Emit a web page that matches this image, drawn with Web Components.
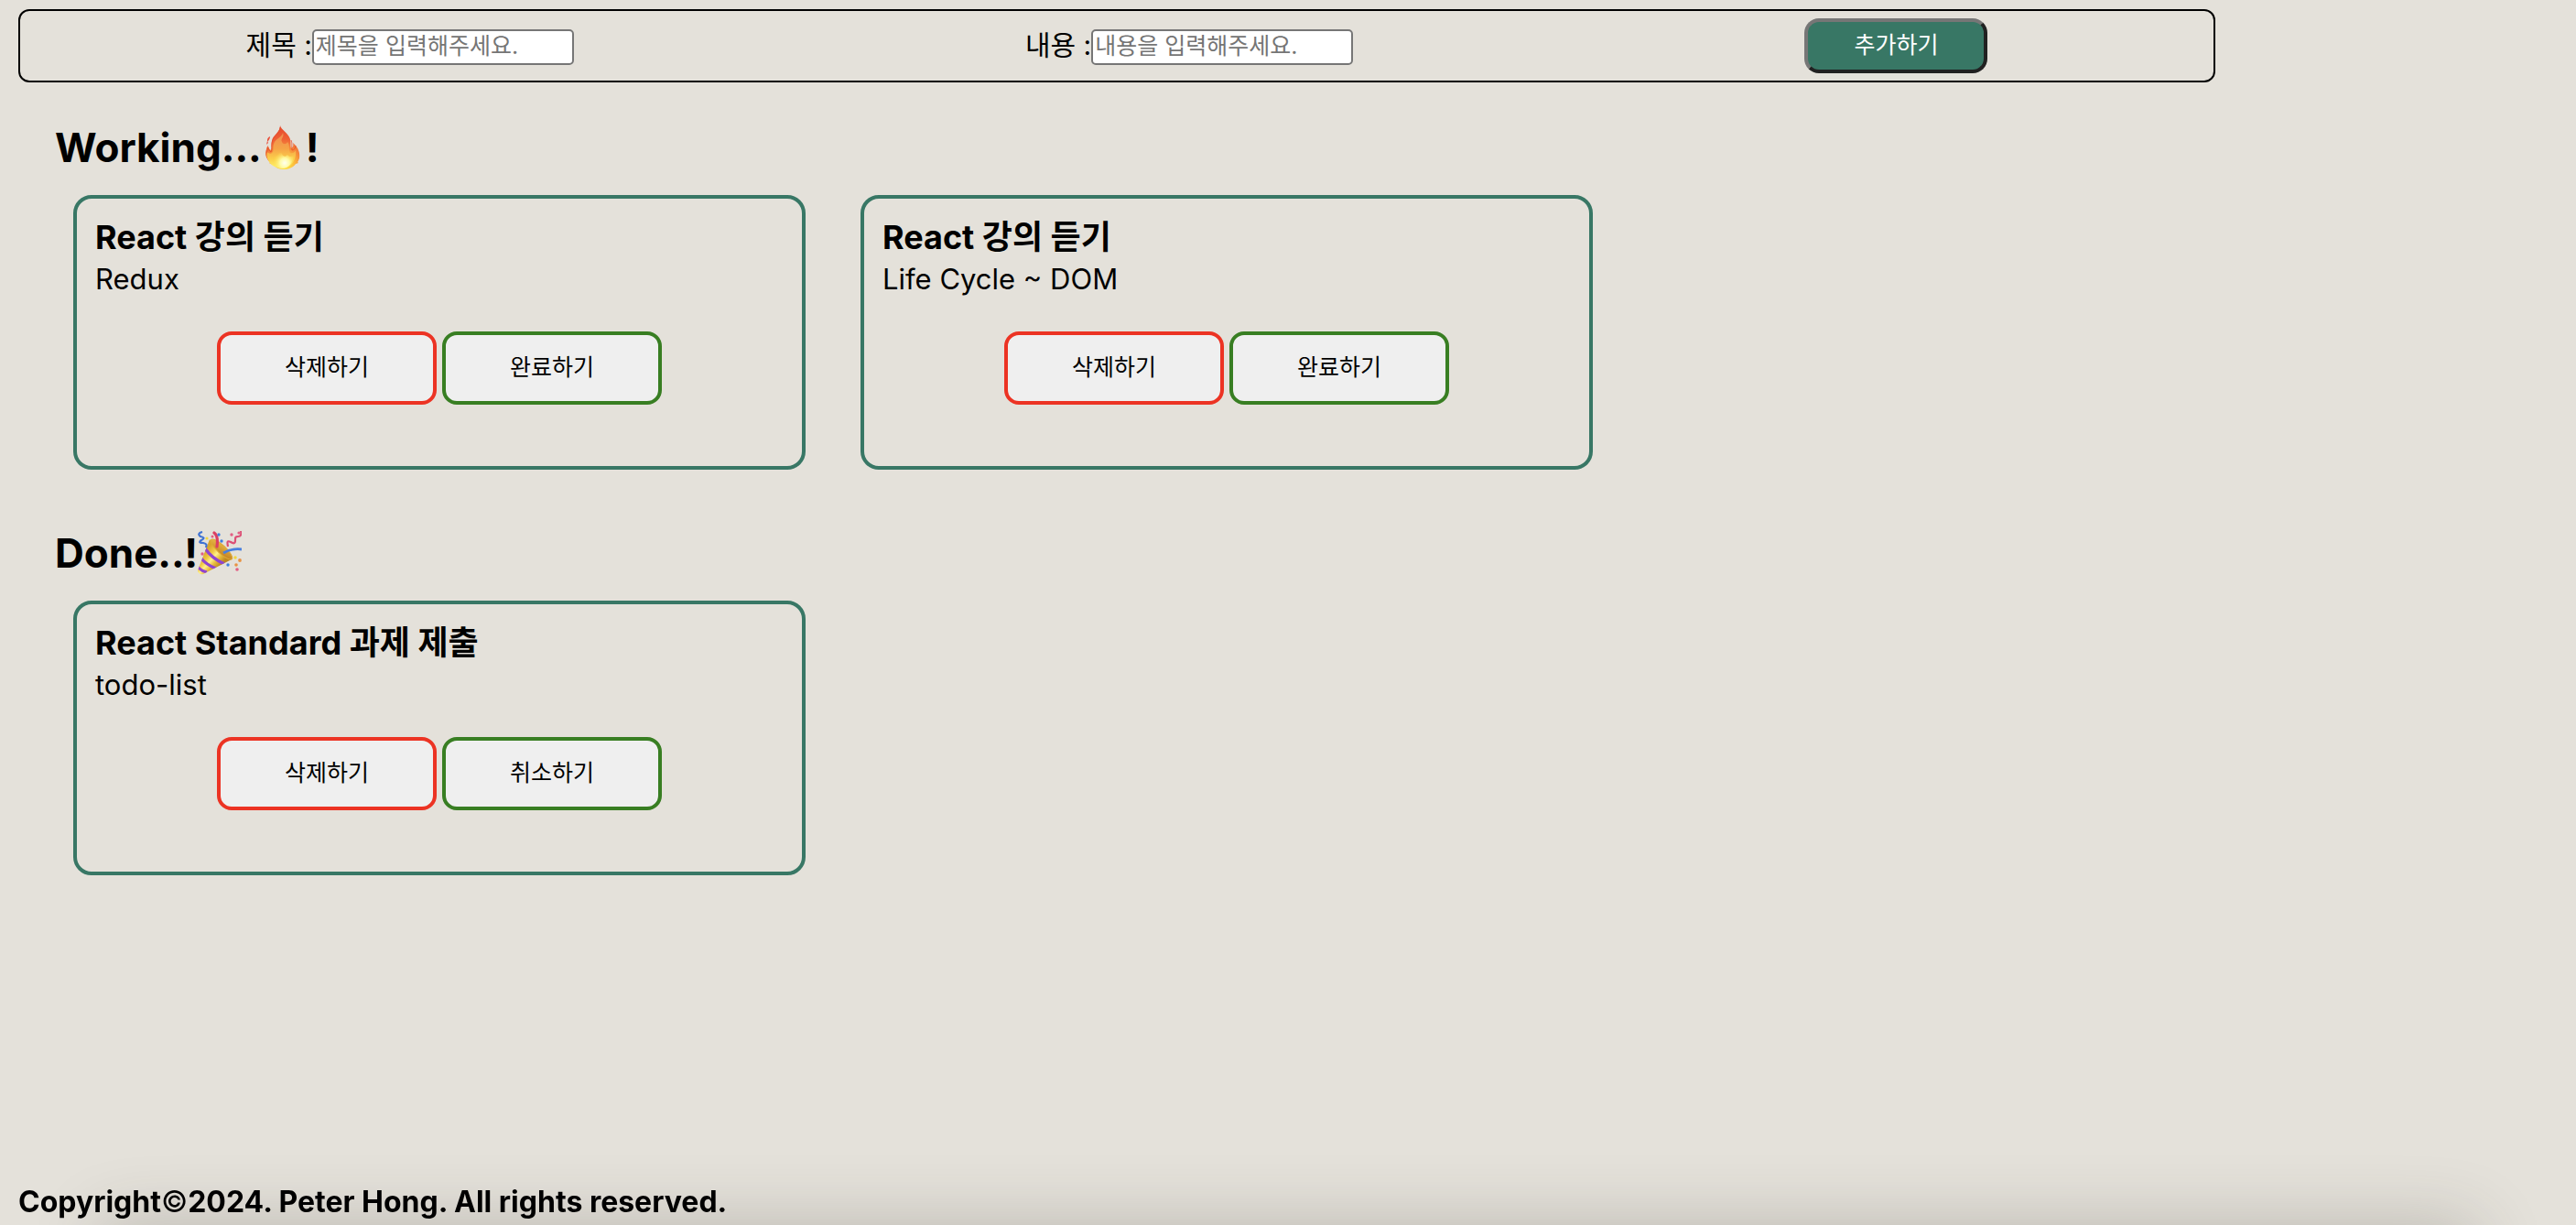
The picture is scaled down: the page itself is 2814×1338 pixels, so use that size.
<!DOCTYPE html>
<html lang="ko">
<head>
<meta charset="utf-8">
<meta name="viewport" content="width=device-width, initial-scale=1">
<title>Todo List</title>
<style>
  body {
    margin: 0;
    background: #e4e1da;
    color: #000;
    font-family: Inter, "Noto Sans CJK KR", sans-serif;
    font-size: 32px;
  }
</style>
</head>
<body>
<todo-app>
  <todo-form></todo-form>
  <todo-section>
    <span slot="heading">Working...<emoji-fire></emoji-fire>!</span>
    <todo-card action="완료하기"><span slot="title">React 강의 듣기</span>Redux</todo-card>
    <todo-card action="완료하기"><span slot="title">React 강의 듣기</span>Life Cycle ~ DOM</todo-card>
  </todo-section>
  <todo-section>
    <span slot="heading">Done..!<emoji-party></emoji-party></span>
    <todo-card action="취소하기"><span slot="title">React Standard 과제 제출</span>todo-list</todo-card>
  </todo-section>
  <todo-footer slot="footer"></todo-footer>
</todo-app>

<script>
  const define = (name, html, setup) => {
    const template = document.createElement('template');
    template.innerHTML = html;
    customElements.define(name, class extends HTMLElement {
      constructor() {
        super();
        this.attachShadow({ mode: 'open' }).append(template.content.cloneNode(true));
      }
      connectedCallback() {
        if (setup) setup(this, this.shadowRoot);
      }
    });
  };

  define('todo-app', `
    <style>
      :host { display: flex; flex-direction: column; box-sizing: border-box; min-height: 100vh; padding: 10px 20px 5px; }
      main { display: flex; flex-direction: column; gap: 62px; max-width: 2400px; width: 100%; flex: 1; }
      ::slotted(todo-form) { margin-bottom: -20px; }
    </style>
    <main><slot></slot></main>
    <slot name="footer"></slot>
  `);

  define('todo-form', `
    <style>
      form { display: flex; flex-wrap: wrap; justify-content: space-around; align-items: center; row-gap: 8px;
        padding: 8px 0; border: 2px solid #000; border-radius: 12px; }
      .field { display: flex; align-items: center; padding-top: 2px; }
      label { font-size: 30px; line-height: 36px; white-space: pre; padding-bottom: 4px; }
      input { box-sizing: border-box; width: 286px; height: 39px; margin: 0; padding: 0 2px 2px;
        border: 2px solid #767676; border-radius: 5px; background: #fff; font: inherit; font-size: 25px; line-height: 30px; }
      input::placeholder { color: #757575; }
      button { box-sizing: border-box; width: 200px; height: 60px; padding: 0 0 6px; border: 4px solid;
        border-color: #767676 #212121 #212121 #767676; border-radius: 16px; background: #387765; color: #fff;
        font: inherit; font-size: 25px; cursor: pointer; }
    </style>
    <form>
      <div class="field"><label for="title">제목 :</label><input id="title" type="text" placeholder="제목을 입력해주세요."></div>
      <div class="field"><label for="body">내용 :</label><input id="body" type="text" placeholder="내용을 입력해주세요."></div>
      <button type="button">추가하기</button>
    </form>
  `);

  define('todo-section', `
    <style>
      :host { display: block; padding-left: 40px; }
      h1 { margin: 0 0 23px; font-size: 44px; line-height: 58px; font-weight: 700; }
      .list { display: flex; flex-wrap: wrap; gap: 60px; padding-left: 20px; }
    </style>
    <section>
      <h1><slot name="heading"></slot></h1>
      <div class="list"><slot></slot></div>
    </section>
  `);

  define('todo-card', `
    <style>
      :host { display: block; box-sizing: border-box; width: 800px; max-width: 100%; min-height: 300px;
        padding: 20px; border: 4px solid #387765; border-radius: 20px; }
      h2, p { margin: 0; line-height: 45px; }
      h2 { font-size: 36px; font-weight: 700; }
      p { font-size: 31px; }
      .actions { display: flex; flex-wrap: wrap; justify-content: center; gap: 6px; margin-top: 35px; }
      button { box-sizing: border-box; width: 240px; height: 80px; padding: 0 0 6px; border: 4px solid #ec3323;
        border-radius: 16px; background: #efefef; color: #000; font: inherit; font-size: 25px; cursor: pointer; }
      .toggle { border-color: #387e22; }
    </style>
    <h2><slot name="title"></slot></h2>
    <p><slot></slot></p>
    <div class="actions">
      <button type="button">삭제하기</button>
      <button type="button" class="toggle"></button>
    </div>
  `, (host, root) => {
    root.querySelector('.toggle').textContent = host.getAttribute('action');
  });

  define('todo-footer', `
    <style>
      :host { display: block; position: relative; }
      p { position: relative; margin: 0; font-size: 32px; line-height: 40px; font-weight: 700; }
      .mark { font-weight: 400; }
      .shade { position: fixed; left: 110px; right: 110px; top: 100%; height: 100px;
        box-shadow: 0 0 76px rgba(60, 55, 45, .24); pointer-events: none; }
    </style>
    <div class="shade"></div>
    <footer><p>Copyright<span class="mark">©</span>2024. Peter Hong. All rights reserved.</p></footer>
  `);

  const emojiStyle = `<style>
    :host { display: inline-block; width: 48px; height: 48px; vertical-align: -8px; }
    svg { display: block; width: 48px; height: 48px; }
  </style>`;

  define('emoji-fire', emojiStyle + `
    <svg viewBox="0 0 48 48" role="img" aria-label="fire">
      <defs>
        <radialGradient id="outer" gradientUnits="userSpaceOnUse" cx="24" cy="43" r="38">
          <stop offset="0" stop-color="#fff04f"/><stop offset=".28" stop-color="#fcc13b"/>
          <stop offset=".5" stop-color="#f58a3a"/><stop offset=".75" stop-color="#ee6035"/><stop offset="1" stop-color="#e8502f"/>
        </radialGradient>
        <linearGradient id="mid" x1="0" y1="0" x2="0" y2="1">
          <stop offset="0" stop-color="#ef8a50"/><stop offset=".45" stop-color="#f5a447"/>
          <stop offset=".75" stop-color="#fbd04b"/><stop offset="1" stop-color="#fff36a"/>
        </linearGradient>
        <radialGradient id="core" gradientUnits="userSpaceOnUse" cx="25" cy="41" r="13">
          <stop offset="0" stop-color="#fffff0"/><stop offset=".4" stop-color="#fffba6"/><stop offset="1" stop-color="#fde04c" stop-opacity="0"/>
        </radialGradient>
      </defs>
      <path fill="url(#outer)" d="M20 0c1 5 9 8 11 15 1 4 0 7 1 10 2-1 3-3 2-6 6 5 8 11 7 17-1 2-1 3-2 4l1 1-3 1c-3 4-8 6-13 6s-9-2-12-5l-4-2 2-1C4 36 3 31 5 26c0-2 1-3 2-4 0 2 1 4 3 5 1-4 0-6 1-10 1-7 9-9 9-17z"/>
      <path fill="#e94c38" d="M9 12c0 2-1 4-3 6v-2c0-2 1-3 3-4zM6 17l1 2-2 2z"/>
      <path fill="none" stroke="#e34b2e" stroke-width="1" opacity=".75" d="M20 2c0 7-8 9-9 17-1 4 1 7-1 10-2-1-3-3-3-5-3 7-2 12 2 16M37 22c0 3-2 5-4 5-1-3 1-7-1-11"/>
      <path fill="url(#mid)" d="M23 8c2 5-3 6-1 10 1 3 5 3 6 0 3 3 1 8 3 12 3 1 5-1 6-3 1 7-2 16-10 19-8 2-17-1-20-8-2-3-2-7-1-9 2 2 4 2 5 1 3-2 0-7 3-12 2-4 8-5 9-10z"/>
      <path fill="url(#core)" d="M9 34c2-1 4-1 5-3 1 2 3 2 4 0 1-2 3-2 4 0 1 3 4 4 6 1 2 3 5 2 7 1-1 8-6 14-13 14S9 42 9 34z"/>
    </svg>
  `);

  define('emoji-party', emojiStyle + `
    <svg viewBox="0 0 48 48" role="img" aria-label="party popper">
      <defs>
        <linearGradient id="cone" gradientUnits="userSpaceOnUse" x1="8" y1="22" x2="25" y2="37">
          <stop offset="0" stop-color="#d9a42c"/><stop offset=".3" stop-color="#f0c945"/>
          <stop offset=".5" stop-color="#fff08a"/><stop offset=".72" stop-color="#e7bd3d"/><stop offset="1" stop-color="#bd861f"/>
        </linearGradient>
        <linearGradient id="mouth" x1="0" y1="0" x2="1" y2="1">
          <stop offset="0" stop-color="#edc349"/><stop offset="1" stop-color="#bd771f"/>
        </linearGradient>
        <clipPath id="body"><path d="M13 9C18 16 27 26 37 31L6 47c-3 1-6-1-6-4z"/></clipPath>
      </defs>
      <path fill="url(#cone)" d="M13 9C18 16 27 26 37 31L6 47c-3 1-6-1-6-4z"/>
      <g clip-path="url(#body)" fill="none" stroke="#8f45d0" stroke-width="3.2">
        <path d="M8 19c4 6 10 12 21 17M3 29c4 5 9 9 17 12M-1 38c3 4 6 6 11 7"/>
      </g>
      <ellipse cx="26" cy="20" rx="15.5" ry="4.5" transform="rotate(43 26 20)" fill="url(#mouth)" stroke="#dda936"/>
      <path fill="none" stroke="#dc3f62" stroke-width="3.2" stroke-linecap="round" d="M18 2c4 3 4 8 3 15"/>
      <path fill="none" stroke="#477fe0" stroke-width="2.8" d="M28 24c5-3 12-5 20-4"/>
      <path fill="none" stroke="#3e72d3" stroke-width="2.2" d="M5 1C1 2 0 4 3 6c4 1 5 2 1 4-3 2-2 3 2 3 4 1 4 2 3 5"/>
      <path fill="none" stroke="#dc4f75" stroke-width="2.2" d="M47 0c1 4 0 6-3 6s-3 1-3 4c0 4-2 4-5 2-4-2-4 0-3 5"/>
      <g fill="#3f7edf"><circle cx="23" cy="4" r="1.7"/><circle cx="26" cy="11" r="1.7"/><circle cx="33" cy="37" r="1.7"/></g>
      <g fill="#e25f83"><circle cx="37" cy="4" r="1.7"/><circle cx="45" cy="2" r="1.6"/><circle cx="5" cy="25" r="1.7"/><circle cx="16" cy="6" r="1.5"/><circle cx="43" cy="42" r="1.8"/></g>
      <g fill="#f1d641"><circle cx="10" cy="8" r="1.6"/><circle cx="41" cy="29" r="1.7"/></g>
      <g fill="#e89343"><circle cx="46" cy="32" r="1.9"/><circle cx="42" cy="37" r="1.8"/></g>
    </svg>
  `);
</script>
</body>
</html>
